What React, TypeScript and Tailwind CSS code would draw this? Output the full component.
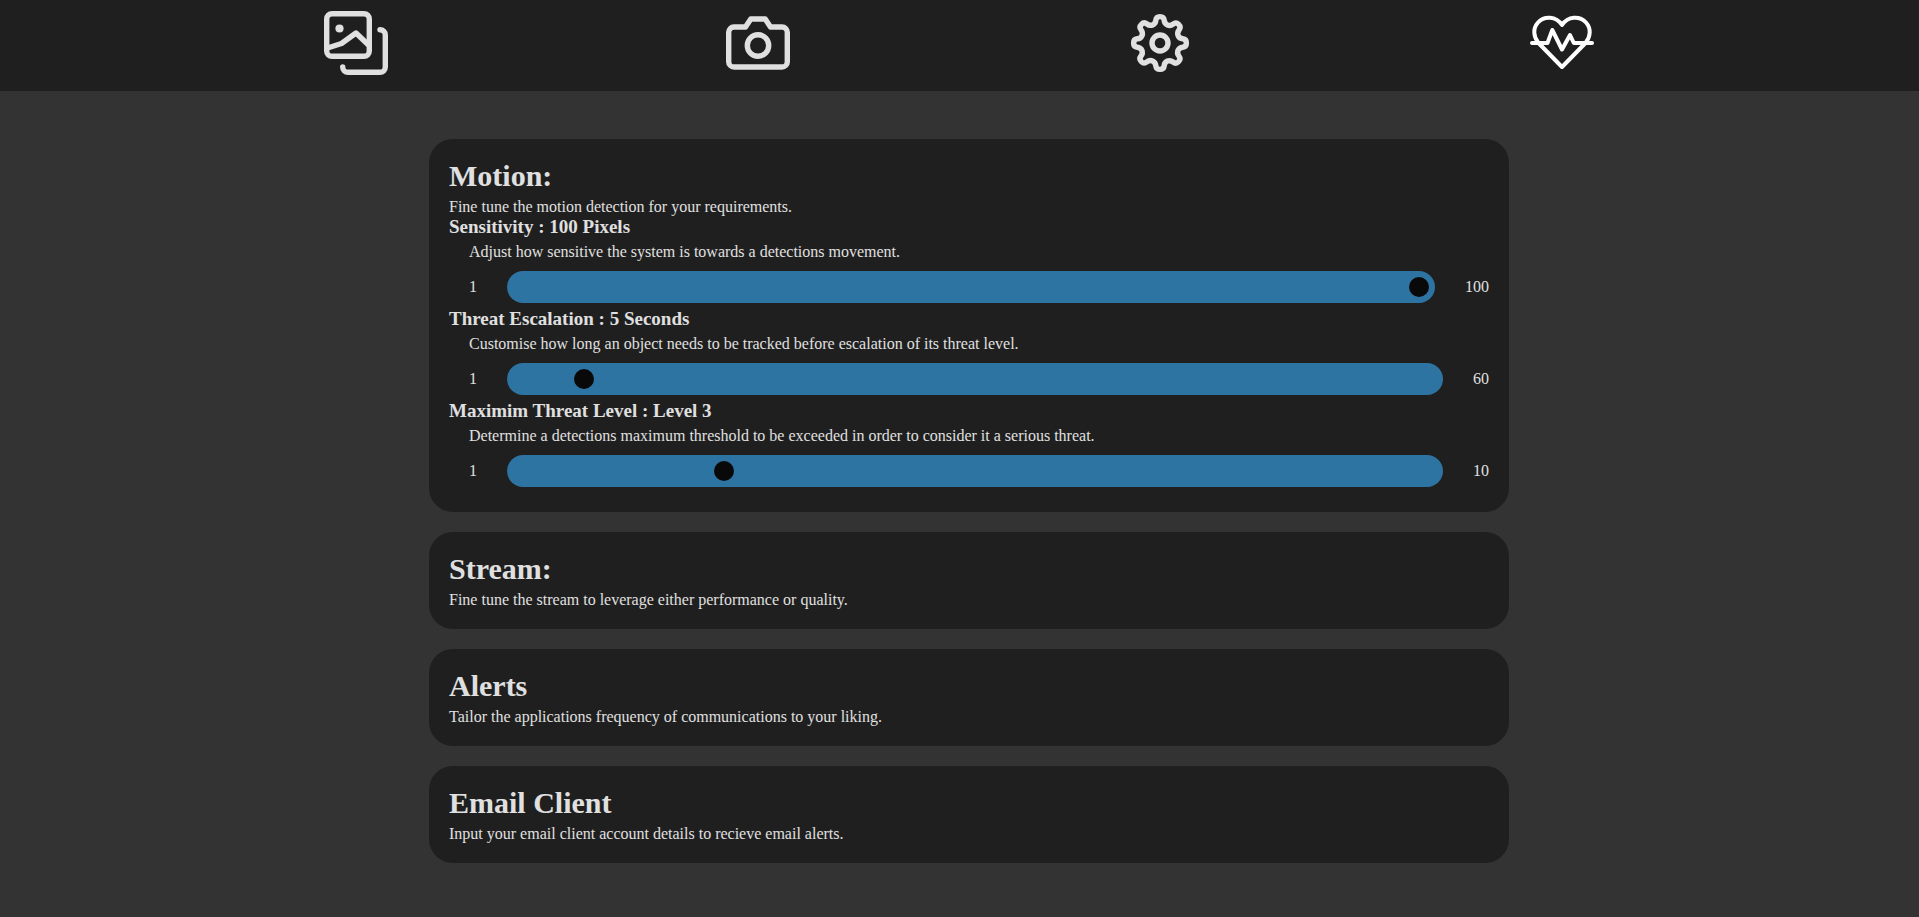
import { useState } from 'react';
import type { ReactNode } from 'react';

type SliderProps = {
  id: string;
  title: string;
  format: (value: number) => string;
  description: string;
  max: number;
  initial: number;
};

const sliders: SliderProps[] = [
  {
    id: 'sensitivity',
    title: 'Sensitivity',
    format: (v) => `${v} Pixels`,
    description: 'Adjust how sensitive the system is towards a detections movement.',
    max: 100,
    initial: 100,
  },
  {
    id: 'escalation',
    title: 'Threat Escalation',
    format: (v) => `${v} Seconds`,
    description: 'Customise how long an object needs to be tracked before escalation of its threat level.',
    max: 60,
    initial: 5,
  },
  {
    id: 'threat-level',
    title: 'Maximim Threat Level',
    format: (v) => `Level ${v}`,
    description:
      'Determine a detections maximum threshold to be exceeded in order to consider it a serious threat.',
    max: 10,
    initial: 3,
  },
];

function ImagesIcon() {
  return (
    <svg viewBox="0 0 64 64" className="size-16" fill="none" stroke="currentColor" strokeWidth="5.4" strokeLinecap="round" strokeLinejoin="round">
      <rect x="2.7" y="2.7" width="42.6" height="42.6" rx="5.3" />
      <path d="M56 18.7a5.3 5.3 0 0 1 5.3 5.3v32a5.3 5.3 0 0 1-5.3 5.3H24a5.3 5.3 0 0 1-5.3-5.3" />
      <circle cx="15.5" cy="17.5" r="4.1" fill="currentColor" stroke="none" />
      <path d="M3.5 37l14-4.500L32 22l12.500 12" strokeLinecap="butt" />
    </svg>
  );
}

function CameraIcon() {
  return (
    <svg viewBox="0 0 64 64" className="size-16" fill="none" stroke="currentColor" strokeWidth="5.4" strokeLinejoin="round">
      <path d="M8 16H19.500l5.300-8h14.400l5.300 8H56a5.300 5.300 0 0 1 5.300 5.300v29.400a5.300 5.300 0 0 1-5.300 5.300H8a5.300 5.300 0 0 1-5.300-5.300V21.300A5.300 5.300 0 0 1 8 16z" />
      <circle cx="32" cy="34.500" r="10.700" />
    </svg>
  );
}

function GearIcon() {
  return (
    <svg viewBox="0 0 64 64" className="size-16" fill="none" stroke="currentColor" strokeWidth="5.4" strokeLinejoin="round">
      <path
        d="M27.400 9q.4-4 4.600-4t4.600 4q.4 3.800 3.600 5.200t6.200-1q3.200-2.500 6.100.4t.4 6.100q-2.400 3-1 6.200T57 29.400q4 .4 4 4.600t-4 4.600q-3.800.4-5.200 3.600t1 6.200q2.500 3.200-.4 6.100t-6.100.4q-3-2.400-6.200-1T36.600 59q-.4 4-4.600 4t-4.600-4q-.4-3.800-3.600-5.200t-6.200 1q-3.200 2.500-6.100-.4t-.4-6.100q2.400-3 1-6.200T7 38.600q-4-.4-4-4.600t4-4.600q3.800-.4 5.200-3.600t-1-6.200q-2.500-3.200.4-6.100t6.100-.4q3 2.400 6.200 1T27.400 9z"
        strokeWidth="6"
        transform="translate(32 32) scale(.91) translate(-32 -34)"
      />
      <circle cx="32" cy="32" r="8" />
    </svg>
  );
}

function HeartbeatIcon() {
  return (
    <svg viewBox="0 0 64 64" className="size-16 text-white" fill="none" stroke="currentColor" strokeWidth="4" strokeLinecap="round" strokeLinejoin="round">
      <path d="M8.500 32C3.500 26 2.500 17.500 8 11.500c6.500-7 18-6.500 24 2.500 6-9 17.500-9.500 24-2.500 5.500 6 4.500 14.500-.5 20.500L32 56z" />
      <path d="M2 32h15.500l4.800-13L32 38.500l8-14.500 3.800 8H62" />
    </svg>
  );
}

const navItems: { label: string; icon: ReactNode }[] = [
  { label: 'Gallery', icon: <ImagesIcon /> },
  { label: 'Camera', icon: <CameraIcon /> },
  { label: 'Settings', icon: <GearIcon /> },
  { label: 'Health', icon: <HeartbeatIcon /> },
];

function Card({ title, description, children }: { title: string; description: string; children?: ReactNode }) {
  return (
    <section className="rounded-3xl bg-[#1f1f1f] p-5">
      <h2 className="text-[30px] leading-[34px] font-bold">{title}</h2>
      <p className="mt-[5px] leading-[18px]">{description}</p>
      {children}
    </section>
  );
}

function SliderRow({ id, title, format, description, max, initial }: SliderProps) {
  const [value, setValue] = useState(initial);
  return (
    <div className="pb-[5px]">
      <h3 className="text-[19px] leading-[22px] font-bold">
        <label htmlFor={id}>
          {title} : {format(value)}
        </label>
      </h3>
      <p className="mt-[5px] pl-5 leading-[18px]">{description}</p>
      <div className="mt-2.5 flex items-center gap-[30px] pl-5 leading-[18px]">
        <span>1</span>
        <input
          id={id}
          type="range"
          min={1}
          max={max}
          value={value}
          onChange={(e) => setValue(Number(e.target.value))}
          className="h-8 min-w-0 flex-1 cursor-pointer appearance-none rounded-2xl bg-[#3498db] px-1.5 opacity-70 [&::-webkit-slider-thumb]:size-5 [&::-webkit-slider-thumb]:appearance-none [&::-webkit-slider-thumb]:rounded-full [&::-webkit-slider-thumb]:bg-black"
        />
        <span>{max}</span>
      </div>
    </div>
  );
}

export default function App() {
  return (
    <div className="min-h-screen bg-[#333333] font-['Liberation_Serif',serif] text-base text-[#e0e0e0]">
      <header className="bg-[#1f1f1f] pt-[11px] pr-px pb-4">
        <nav className="mx-auto grid max-w-[1608px] grid-cols-4 justify-items-center">
          {navItems.map(({ label, icon }) => (
            <a key={label} href="#" aria-label={label}>
              {icon}
            </a>
          ))}
        </nav>
      </header>
      <main className="pt-12 pb-12 pl-[19px]">
        <div className="mx-auto flex max-w-[1080px] flex-col gap-5">
          <Card title="Motion:" description="Fine tune the motion detection for your requirements.">
            {sliders.map((s) => (
              <SliderRow key={s.id} {...s} />
            ))}
          </Card>
          <Card title="Stream:" description="Fine tune the stream to leverage either performance or quality." />
          <Card title="Alerts" description="Tailor the applications frequency of communications to your liking." />
          <Card title="Email Client" description="Input your email client account details to recieve email alerts." />
        </div>
      </main>
    </div>
  );
}
